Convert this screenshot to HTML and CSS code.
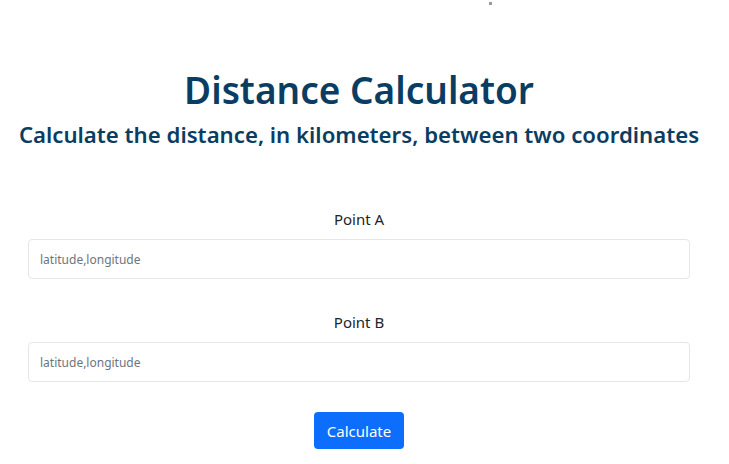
FILE: index.html
```html
<!DOCTYPE html>
<html>
<head>
<meta charset="utf-8">
<link rel="stylesheet" href="styles.css">
</head>
<body>
<span class="dot"></span>
<main class="page">
  <header class="head">
    <h1 class="title">Distance Calculator</h1>
    <h2 class="subtitle">Calculate the distance, in kilometers, between two coordinates</h2>
  </header>
  <form class="form">
    <label class="field">
      <span class="label">Point A</span>
      <input class="input" type="text" placeholder="latitude,longitude">
    </label>
    <label class="field">
      <span class="label">Point B</span>
      <input class="input" type="text" placeholder="latitude,longitude">
    </label>
    <button class="btn" type="button">Calculate</button>
  </form>
</main>
</body>
</html>
```
FILE: styles.css
```css
* { box-sizing: border-box; }
html, body { margin: 0; padding: 0; background: #fff; }
body {
  font-family: "Noto Sans", "Open Sans", sans-serif;
  color: #212529;
  position: relative;
  width: 729px;
  height: 464px;
  overflow: hidden;
}
.dot {
  position: absolute;
  left: 489px;
  top: 2px;
  width: 3px;
  height: 3px;
  background: #9a9a9a;
}
.page {
  width: 662px;
  margin-left: 28px;
  padding-top: 63px;
  display: flex;
  flex-direction: column;
}
.head { text-align: center; }
.title {
  margin: 0;
  font-size: 37px;
  font-weight: 600;
  line-height: 54px;
  color: #0b3d62;
}
.subtitle {
  margin: 2px -20px 0;
  font-size: 22.2px;
  font-weight: 600;
  line-height: 32px;
  color: #0b3d62;
}
.form {
  margin-top: 56px;
  display: flex;
  flex-direction: column;
  align-items: center;
}
.field {
  width: 100%;
  display: flex;
  flex-direction: column;
  align-items: center;
  gap: 8px;
  margin-bottom: 31px;
}
.label {
  font-size: 15px;
  line-height: 24px;
}
.input {
  width: 100%;
  height: 40px;
  border: 1.5px solid #e6e6e6;
  border-radius: 4px;
  padding: 0 11px;
  font-family: inherit;
  font-size: 12px;
  color: #212529;
  background: #fff;
  outline: none;
}
.input::placeholder { color: #6c757d; }
.btn {
  margin-top: -1px;
  width: 90px;
  height: 37px;
  border: none;
  border-radius: 4px;
  background: #0d6efd;
  color: #fff;
  font-family: inherit;
  font-size: 15px;
}
```
